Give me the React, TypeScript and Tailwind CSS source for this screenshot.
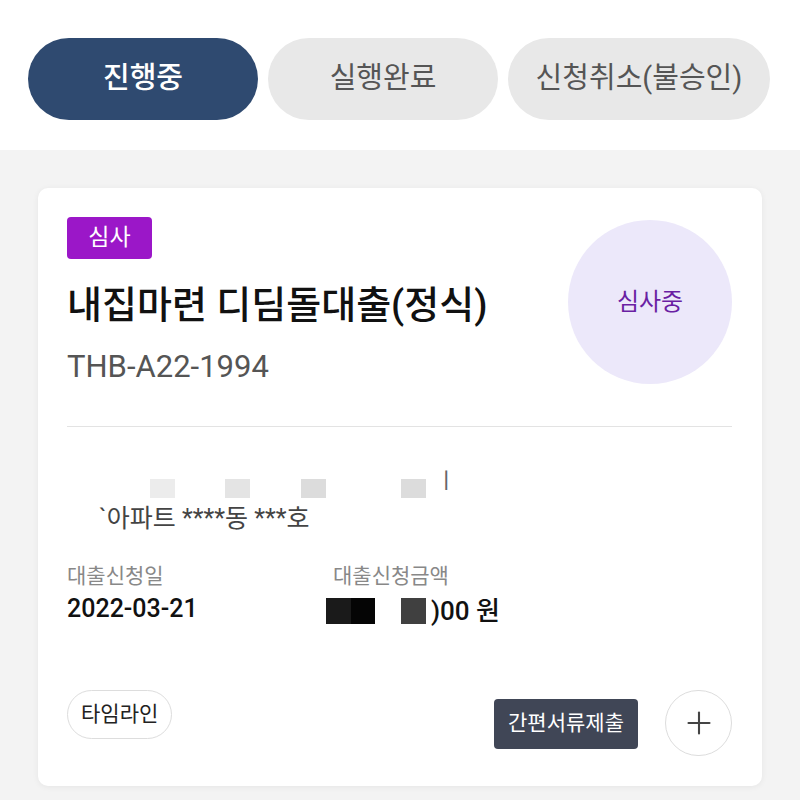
import { Plus } from 'lucide-react';

const font = { fontFamily: 'Roboto, "Noto Sans CJK KR", "Noto Sans", sans-serif' };

const tabs = [
  { label: '진행중', active: true, width: 'w-[230px]' },
  { label: '실행완료', active: false, width: 'w-[230px]' },
  { label: '신청취소(불승인)', active: false, width: 'w-[262px]' },
];

export default function App() {
  return (
    <div className="min-h-[800px] w-[800px] bg-[#f3f3f3]" style={font}>
      {/* status tabs */}
      <div className="bg-white h-[150px] pt-[38px] pl-[28px]">
        <div className="flex gap-[10px]">
          {tabs.map((t) => (
            <button
              key={t.label}
              className={`${t.width} h-[82px] rounded-full text-[29px] flex items-center justify-center ${
                t.active ? 'bg-[#2f4a70] text-white font-medium' : 'bg-[#e8e8e8] text-[#555555]'
              }`}
            >
              {t.label}
            </button>
          ))}
        </div>
      </div>

      {/* loan card */}
      <div className="px-[38px] pt-[38px] pb-[15px]">
        <div className="bg-white rounded-[10px] shadow-[0_1px_6px_rgba(0,0,0,0.06)] pt-[29px] pb-[30px] pl-[29px] pr-[30px]">
          <div className="flex justify-between">
            <div>
              <div className="w-[85px] h-[42px] bg-[#9b17c8] rounded-[4px] text-white text-[23px] flex items-center justify-center">
                심사
              </div>
              <div className="mt-[22px] text-[38px] leading-[48px] font-medium text-[#111111]">
                내집마련 디딤돌대출(정식)
              </div>
              <div className="mt-[19px] text-[31px] leading-[38px] text-[#555555]">THB-A22-1994</div>
            </div>
            <div className="mt-[3px] w-[164px] h-[164px] rounded-full bg-[#ece8fa] flex items-center justify-center text-[24px] text-[#6a1fa3]">
              심사중
            </div>
          </div>

          <div className="mt-[40px] h-px bg-[#e3e3e3]" />

          {/* redacted address */}
          <div className="mt-[42px] flex items-start h-[30px] text-[22px] text-[#444444]">
            <span className="ml-[83px] mt-[10px] w-[25px] h-[19px] bg-[#ececec]" />
            <span className="ml-[50px] mt-[10px] w-[25px] h-[19px] bg-[#e4e4e4]" />
            <span className="ml-[51px] mt-[10px] w-[25px] h-[19px] bg-[#dcdcdc]" />
            <span className="ml-[75px] mt-[10px] w-[25px] h-[19px] bg-[#dcdcdc]" />
            <span className="ml-[10px] leading-[24px] text-[#666666]">ㅣ</span>
          </div>
          <div className="mt-[4px] pl-[32px] text-[25px] leading-[32px] text-[#444444]">`아파트 ****동 ***호</div>

          <div className="mt-[28px] flex">
            <div className="w-[266px]">
              <div className="text-[21px] leading-[26px] text-[#888888]">대출신청일</div>
              <div className="mt-[4px] text-[25px] leading-[32px] font-medium text-[#111111]">2022-03-21</div>
            </div>
            <div>
              <div className="text-[21px] leading-[26px] text-[#888888]">대출신청금액</div>
              <div className="mt-[4px] flex items-center h-[36px] -ml-[7px]">
                <span className="w-[25px] h-[26px] bg-[#1a1a1a]" />
                <span className="w-[24px] h-[26px] bg-[#050505]" />
                <span className="ml-[26px] w-[25px] h-[26px] bg-[#404040]" />
                <span className="ml-[5px] text-[26px] font-medium text-[#111111]">)00 원</span>
              </div>
            </div>
          </div>

          {/* actions */}
          <div className="mt-[61px] flex items-start">
            <button className="h-[49px] px-[13px] rounded-full border border-[#dddddd] text-[21px] text-[#222222]">
              타임라인
            </button>
            <div className="ml-auto flex items-start">
              <button className="mt-[9px] h-[50px] w-[144px] rounded-[4px] bg-[#404656] text-white text-[21px]">
                간편서류제출
              </button>
              <button className="ml-[27px] w-[67px] h-[66px] rounded-full border border-[#dddddd] flex items-center justify-center text-[#444444]">
                <Plus size={36} strokeWidth={1.4} />
              </button>
            </div>
          </div>
        </div>
      </div>
    </div>
  );
}
